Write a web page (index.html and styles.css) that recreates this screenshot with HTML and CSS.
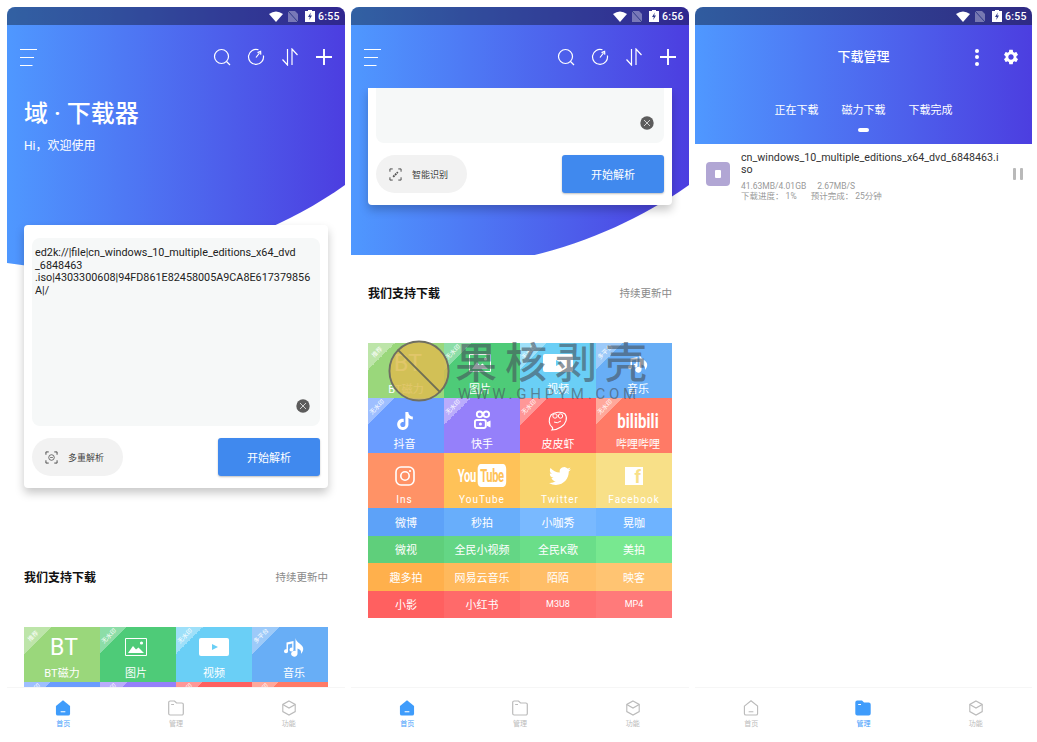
FILE: index.html
```html
<!DOCTYPE html>
<html lang="zh-CN">
<head>
    <meta charset="UTF-8">
    <meta name="viewport" content="width=device-width, initial-scale=1.0">
    <title>域下载器</title>
    <link rel="stylesheet" href="styles.css">
</head>
<body>
    <!-- shared icons -->
    <svg class="sprite" xmlns="http://www.w3.org/2000/svg">
        <symbol id="i-wifi" viewBox="0 0 14 11"><path d="M0 3Q7-2 14 3L7 11Z" fill="#fff"/></symbol>
        <symbol id="i-sim" viewBox="0 0 10 11"><path d="M0 0H7L10 3V11H0Z" fill="#fff" opacity=".35"/><path d="M0 0L10 11" stroke="#2f3a8a" stroke-width="1"/></symbol>
        <symbol id="i-bat" viewBox="0 0 10 12"><path d="M3 0H7V1H10V12H0V1H3Z" fill="#fff"/><path d="M5.8 2.5L3 7H4.8L4.2 10L7 5.5H5.2Z" fill="#2f3a8a"/></symbol>
        <symbol id="i-menu" viewBox="0 0 18 18"><path d="M0 1.5H17M0 9.5H14M0 17.5H12.5" stroke="#fff" stroke-width="1.1" fill="none"/></symbol>
        <symbol id="i-search" viewBox="0 0 18 18"><circle cx="8.5" cy="8.5" r="7" stroke="#fff" stroke-width="1.2" fill="none"/><path d="M13.5 13.5L17 17" stroke="#fff" stroke-width="1.2"/></symbol>
        <symbol id="i-refresh" viewBox="0 0 18 18"><path d="M11.5 1.8A7.5 7.5 0 1 0 16.4 7.5" stroke="#fff" stroke-width="1.2" fill="none"/><path d="M9 9.5L12.5 5M10.5 4.6L13.6 3.4L13.8 6.6" stroke="#fff" stroke-width="1.2" fill="none"/></symbol>
        <symbol id="i-arrows" viewBox="0 0 18 18"><path d="M6.5 1V17L1.5 11.5M11 17V1L16.5 7" stroke="#fff" stroke-width="1.2" fill="none"/></symbol>
        <symbol id="i-plus" viewBox="0 0 18 18"><path d="M1 9H17M9 1V17" stroke="#fff" stroke-width="1.9"/></symbol>
        <symbol id="i-photo" viewBox="0 0 22 18"><path d="M.5.5H21.5V17.5H.5Z" stroke="#fff" fill="none"/><path d="M3 15L8 8L11 11.5L13.5 9.5L19 15Z" fill="#fff"/><circle cx="16.5" cy="5" r="1.6" fill="#fff"/></symbol>
        <symbol id="i-music" viewBox="0 0 20 20"><path d="M11.5 1C12 5 16 6 18.5 9.5C20 12 19 15 17 17C17.5 14 16.5 12.5 13.5 11.5V16.5A3.2 3 0 1 1 11.5 14Z" fill="#fff"/><path d="M2.5 5.5L9.5 4V12.5A2 2 0 1 1 8.2 10.7V6.5L4 7.5V14A2 2 0 1 1 2.5 12.3Z" fill="#fff"/></symbol>
        <symbol id="i-tiktok" viewBox="0 0 24 24"><path d="M12.525.02c1.31-.02 2.61-.01 3.91-.02.08 1.53.63 3.09 1.75 4.17 1.12 1.11 2.7 1.62 4.24 1.79v4.03c-1.44-.05-2.89-.35-4.2-.97-.57-.26-1.1-.59-1.62-.93-.01 2.92.01 5.84-.02 8.75-.08 1.4-.54 2.79-1.35 3.94-1.31 1.92-3.58 3.17-5.91 3.21-1.43.08-2.86-.31-4.08-1.03-2.02-1.19-3.44-3.37-3.65-5.71-.02-.5-.03-1-.01-1.49.18-1.9 1.12-3.72 2.58-4.96 1.66-1.44 3.98-2.13 6.15-1.72.02 1.48-.04 2.96-.04 4.44-.99-.32-2.15-.23-3.02.37-.63.41-1.11 1.04-1.36 1.75-.21.51-.15 1.07-.14 1.61.24 1.64 1.82 3.02 3.5 2.87 1.12-.01 2.19-.66 2.77-1.61.19-.33.4-.67.41-1.06.1-1.79.06-3.57.07-5.36.01-4.03-.01-8.05.02-12.07z" fill="#fff"/></symbol>
        <symbol id="i-kuaishou" viewBox="0 0 18 20"><g fill="none" stroke="#fff" stroke-width="2"><circle cx="6" cy="4.5" r="3"/><circle cx="13" cy="4.5" r="3"/><rect x="1" y="10.5" width="11.5" height="8.5" rx="2"/></g><circle cx="6.8" cy="14.8" r="1.6" fill="#fff"/><path d="M13.5 13L17.5 11V18.5L13.5 16.5Z" fill="#fff"/></symbol>
        <symbol id="i-pipixia" viewBox="0 0 20 20"><path d="M3 4C6 1 14 0 17 3C20 7 18 13 13 16C10 18 7 19 4 19C5 18 5 17 4 16C1 14 0 8 3 4Z" fill="none" stroke="#fff" stroke-width="1.1"/><circle cx="7" cy="5" r="2.2" fill="none" stroke="#fff"/><circle cx="12.5" cy="5" r="2.2" fill="none" stroke="#fff"/><path d="M6 11Q9 13 13 10" fill="none" stroke="#fff"/></symbol>
        <symbol id="i-insta" viewBox="0 0 20 20"><rect x="1" y="1" width="18" height="18" rx="5" fill="none" stroke="#fff" stroke-width="1.6"/><circle cx="10" cy="10" r="4.2" fill="none" stroke="#fff" stroke-width="1.6"/><circle cx="15" cy="5" r="1.1" fill="#fff"/></symbol>
        <symbol id="i-twitter" viewBox="0 0 24 24"><path d="M23.953 4.57a10 10 0 01-2.825.775 4.958 4.958 0 002.163-2.723c-.951.555-2.005.959-3.127 1.184a4.92 4.92 0 00-8.384 4.482C7.69 8.095 4.067 6.13 1.64 3.162a4.822 4.822 0 00-.666 2.475c0 1.71.87 3.213 2.188 4.096a4.904 4.904 0 01-2.228-.616v.06a4.923 4.923 0 003.946 4.827 4.996 4.996 0 01-2.212.085 4.936 4.936 0 004.604 3.417 9.867 9.867 0 01-6.102 2.105c-.39 0-.779-.023-1.17-.067a13.995 13.995 0 007.557 2.209c9.053 0 13.998-7.496 13.998-13.985 0-.21 0-.42-.015-.63A9.935 9.935 0 0024 4.59z" fill="#fff"/></symbol>
        <symbol id="i-gear" viewBox="0 0 24 24"><path d="M19.14 12.94c.04-.3.06-.61.06-.94 0-.32-.02-.64-.07-.94l2.03-1.58c.18-.14.23-.41.12-.61l-1.92-3.32c-.12-.22-.37-.29-.59-.22l-2.39.96c-.5-.38-1.03-.7-1.62-.94l-.36-2.54c-.04-.24-.24-.41-.48-.41h-3.84c-.24 0-.43.17-.47.41l-.36 2.54c-.59.24-1.13.57-1.62.94l-2.39-.96c-.22-.08-.47 0-.59.22L2.74 8.87c-.12.21-.08.47.12.61l2.03 1.58c-.05.3-.09.63-.09.94s.02.64.07.94l-2.03 1.58c-.18.14-.23.41-.12.61l1.92 3.32c.12.22.37.29.59.22l2.39-.96c.5.38 1.03.7 1.62.94l.36 2.54c.05.24.24.41.48.41h3.84c.24 0 .44-.17.47-.41l.36-2.54c.59-.24 1.13-.56 1.62-.94l2.39.96c.22.08.47 0 .59-.22l1.92-3.32c.12-.22.07-.47-.12-.61l-2.01-1.58zM12 15.6c-1.98 0-3.6-1.62-3.6-3.6s1.62-3.6 3.6-3.6 3.6 1.62 3.6 3.6-1.62 3.6-3.6 3.6z" fill="#fff"/></symbol>
        <symbol id="i-clear" viewBox="0 0 14 14"><circle cx="7" cy="7" r="6.7" fill="#5c5c5c"/><path d="M4 4L10 10M10 4L4 10" stroke="#ddd" stroke-width=".9"/></symbol>
        <symbol id="i-scan" viewBox="0 0 14 14"><path d="M1 4V1H4M10 1H13V4M13 10V13H10M4 13H1V10" fill="none" stroke="#444" stroke-width="1"/><circle cx="7" cy="7" r="3" fill="none" stroke="#555" stroke-width=".9"/><path d="M5.5 7H8.5" stroke="#555" stroke-width=".8"/></symbol>
        <symbol id="i-link" viewBox="0 0 14 14"><path d="M1 4V1H4M10 1H13V4M13 10V13H10M4 13H1V10" fill="none" stroke="#444" stroke-width="1"/><path d="M4.5 9.5L9.5 4.5" stroke="#555" stroke-width="2" stroke-dasharray="2 .8"/></symbol>
        <symbol id="i-home" viewBox="0 0 16 17"><path d="M1 6.5L8 .8L15 6.5V14.5A1.6 1.6 0 0 1 13.4 16H2.6A1.6 1.6 0 0 1 1 14.5Z" fill="none" stroke="#bbb" stroke-width="1.2"/><path d="M5.5 12.5H10.5" stroke="#bbb" stroke-width="1.1"/></symbol>
        <symbol id="i-home-on" viewBox="0 0 16 17"><path d="M.5 6.5L8 .3L15.5 6.5V14.5A2 2 0 0 1 13.5 16.5H2.5A2 2 0 0 1 .5 14.5Z" fill="#3f9cfb"/><path d="M5.5 12.5H10.5" stroke="#fff" stroke-width="1.1"/></symbol>
        <symbol id="i-folder" viewBox="0 0 16 16"><path d="M.7 2.5A1.5 1.5 0 0 1 2.2 1H6.5L8.5 3H13.8A1.5 1.5 0 0 1 15.3 4.5V13.5A1.5 1.5 0 0 1 13.8 15H2.2A1.5 1.5 0 0 1 .7 13.5Z" fill="none" stroke="#bbb" stroke-width="1.2"/><path d="M3.2 4.5H6" stroke="#bbb"/></symbol>
        <symbol id="i-folder-on" viewBox="0 0 16 16"><path d="M.3 2.5A2 2 0 0 1 2.3.5H7L9 2.5H13.7A2 2 0 0 1 15.7 4.5V13.5A2 2 0 0 1 13.7 15.5H2.3A2 2 0 0 1 .3 13.5Z" fill="#3f9cfb"/><path d="M3.2 4.5H6" stroke="#fff"/></symbol>
        <symbol id="i-box" viewBox="0 0 16 17"><path d="M8 1L14.6 4.7V12.3L8 16L1.4 12.3V4.7Z" fill="none" stroke="#bbb" stroke-width="1.2"/><path d="M1.4 4.7L8 8.5L14.6 4.7" fill="none" stroke="#bbb" stroke-width="1.2"/></symbol>
    </svg>

    <div class="phones">

        <!-- home -->
        <section class="phone">
            <div class="hero-bg"></div>
            <div class="status">
                <svg class="st-wifi"><use href="#i-wifi"/></svg>
                <svg class="st-sim"><use href="#i-sim"/></svg>
                <svg class="st-bat"><use href="#i-bat"/></svg>
                <span class="st-time">6:55</span>
            </div>
            <div class="toolbar">
                <svg class="tool"><use href="#i-menu"/></svg>
                <div class="tool-group">
                    <svg class="tool"><use href="#i-search"/></svg>
                    <svg class="tool"><use href="#i-refresh"/></svg>
                    <svg class="tool"><use href="#i-arrows"/></svg>
                    <svg class="tool"><use href="#i-plus"/></svg>
                </div>
            </div>
            <main class="content">
                <div class="intro">
                    <h1 class="app-name">域 · 下载器</h1>
                    <p class="app-hi">Hi，欢迎使用</p>
                </div>
                <div class="card">
                    <div class="link-box link-box-tall">
                        <div class="link-text">ed2k://|file|cn_windows_10_multiple_editions_x64_dvd<br>_6848463<br>.iso|4303300608|94FD861E82458005A9CA8E617379856<br>A|/</div>
                        <svg class="clear"><use href="#i-clear"/></svg>
                    </div>
                    <div class="card-actions">
                        <div class="pill"><svg class="pill-icon"><use href="#i-scan"/></svg>多重解析</div>
                        <div class="start-btn">开始解析</div>
                    </div>
                </div>
                <div class="support-head">
                    <h2>我们支持下载</h2>
                    <span>持续更新中</span>
                </div>
                <div class="grid">
                    <div class="cell cell-top c-bt"><span class="tag"><b>推荐</b></span><div class="cell-icon bt-mark">BT</div><div class="cell-label">BT磁力</div></div>
                    <div class="cell cell-top c-photo"><span class="tag"><b>无水印</b></span><div class="cell-icon"><svg class="ic-photo"><use href="#i-photo"/></svg></div><div class="cell-label">图片</div></div>
                    <div class="cell cell-top c-video"><span class="tag"><b>无水印</b></span><div class="cell-icon"><div class="video-mark"></div></div><div class="cell-label">视频</div></div>
                    <div class="cell cell-top c-music"><span class="tag"><b>多平台</b></span><div class="cell-icon"><svg class="ic-music"><use href="#i-music"/></svg></div><div class="cell-label">音乐</div></div>
                    <div class="cell c-tiktok"><span class="tag"><b>无水印</b></span></div>
                    <div class="cell c-kuaishou"><span class="tag"><b>无水印</b></span></div>
                    <div class="cell c-pipixia"><span class="tag"><b>无水印</b></span></div>
                    <div class="cell c-bili"><span class="tag"><b>无水印</b></span></div>
                </div>
            </main>
            <nav class="tabbar">
                <div class="tab-item tab-on"><svg><use href="#i-home-on"/></svg><span>首页</span></div>
                <div class="tab-item"><svg><use href="#i-folder"/></svg><span>管理</span></div>
                <div class="tab-item"><svg><use href="#i-box"/></svg><span>功能</span></div>
            </nav>
        </section>

        <!-- home, scrolled -->
        <section class="phone">
            <div class="hero-bg hero-bg-cut"></div>
            <div class="status">
                <svg class="st-wifi"><use href="#i-wifi"/></svg>
                <svg class="st-sim"><use href="#i-sim"/></svg>
                <svg class="st-bat"><use href="#i-bat"/></svg>
                <span class="st-time">6:56</span>
            </div>
            <div class="toolbar">
                <svg class="tool"><use href="#i-menu"/></svg>
                <div class="tool-group">
                    <svg class="tool"><use href="#i-search"/></svg>
                    <svg class="tool"><use href="#i-refresh"/></svg>
                    <svg class="tool"><use href="#i-arrows"/></svg>
                    <svg class="tool"><use href="#i-plus"/></svg>
                </div>
            </div>
            <main class="content">
                <div class="card card-scrolled">
                    <div class="link-box link-box-short">
                        <svg class="clear"><use href="#i-clear"/></svg>
                    </div>
                    <div class="card-actions">
                        <div class="pill"><svg class="pill-icon"><use href="#i-link"/></svg>智能识别</div>
                        <div class="start-btn">开始解析</div>
                    </div>
                </div>
                <div class="support-head">
                    <h2>我们支持下载</h2>
                    <span>持续更新中</span>
                </div>
                <div class="grid">
                    <div class="cell cell-top c-bt"><span class="tag"><b>推荐</b></span><div class="cell-icon bt-mark">BT</div><div class="cell-label">BT磁力</div></div>
                    <div class="cell cell-top c-photo"><span class="tag"><b>无水印</b></span><div class="cell-icon"><svg class="ic-photo"><use href="#i-photo"/></svg></div><div class="cell-label">图片</div></div>
                    <div class="cell cell-top c-video"><span class="tag"><b>无水印</b></span><div class="cell-icon"><div class="video-mark"></div></div><div class="cell-label">视频</div></div>
                    <div class="cell cell-top c-music"><span class="tag"><b>多平台</b></span><div class="cell-icon"><svg class="ic-music"><use href="#i-music"/></svg></div><div class="cell-label">音乐</div></div>

                    <div class="cell c-tiktok"><span class="tag"><b>无水印</b></span><div class="cell-icon"><svg class="ic-tiktok"><use href="#i-tiktok"/></svg></div><div class="cell-label">抖音</div></div>
                    <div class="cell c-kuaishou"><span class="tag"><b>无水印</b></span><div class="cell-icon"><svg class="ic-kuaishou"><use href="#i-kuaishou"/></svg></div><div class="cell-label">快手</div></div>
                    <div class="cell c-pipixia"><span class="tag"><b>无水印</b></span><div class="cell-icon"><svg class="ic-pipixia"><use href="#i-pipixia"/></svg></div><div class="cell-label">皮皮虾</div></div>
                    <div class="cell c-bili"><span class="tag"><b>无水印</b></span><div class="cell-icon bili-mark">bilibili</div><div class="cell-label">哔哩哔哩</div></div>

                    <div class="cell c-ins"><div class="cell-icon"><svg class="ic-insta"><use href="#i-insta"/></svg></div><div class="cell-label cell-latin">Ins</div></div>
                    <div class="cell c-yt"><div class="cell-icon"><div class="yt-mark">You<span>Tube</span></div></div><div class="cell-label cell-latin">YouTube</div></div>
                    <div class="cell c-tw"><div class="cell-icon"><svg class="ic-twitter"><use href="#i-twitter"/></svg></div><div class="cell-label cell-latin">Twitter</div></div>
                    <div class="cell c-fb"><div class="cell-icon"><div class="fb-mark">f</div></div><div class="cell-label cell-latin">Facebook</div></div>

                    <div class="cell-small s1">微博</div>
                    <div class="cell-small s2">秒拍</div>
                    <div class="cell-small s3">小咖秀</div>
                    <div class="cell-small s4">晃咖</div>
                    <div class="cell-small s5">微视</div>
                    <div class="cell-small s6">全民小视频</div>
                    <div class="cell-small s7">全民K歌</div>
                    <div class="cell-small s8">美拍</div>
                    <div class="cell-small s9">趣多拍</div>
                    <div class="cell-small s10">网易云音乐</div>
                    <div class="cell-small s11">陌陌</div>
                    <div class="cell-small s12">映客</div>
                    <div class="cell-small s13">小影</div>
                    <div class="cell-small s14">小红书</div>
                    <div class="cell-small s15">M3U8</div>
                    <div class="cell-small s16">MP4</div>
                </div>
            </main>
            <nav class="tabbar">
                <div class="tab-item tab-on"><svg><use href="#i-home-on"/></svg><span>首页</span></div>
                <div class="tab-item"><svg><use href="#i-folder"/></svg><span>管理</span></div>
                <div class="tab-item"><svg><use href="#i-box"/></svg><span>功能</span></div>
            </nav>
            <!-- site watermark laid over the shot -->
            <svg class="wm-circle" viewBox="0 0 64 64"><circle cx="32" cy="32" r="30.5" fill="#dcbc50" fill-opacity=".85" stroke="#6f6f62" stroke-width="2"/><path d="M10 10L54 54" stroke="#6f6f55" stroke-width="2"/></svg>
            <div class="wm-text">
                <div class="wm-name">果核剥壳</div>
                <div class="wm-url">WWW.GHPYM.COM</div>
            </div>
        </section>

        <!-- download manager -->
        <section class="phone">
            <div class="status status-solid">
                <svg class="st-wifi"><use href="#i-wifi"/></svg>
                <svg class="st-sim"><use href="#i-sim"/></svg>
                <svg class="st-bat"><use href="#i-bat"/></svg>
                <span class="st-time">6:55</span>
            </div>
            <header class="dl-head">
                <div class="dl-title-row">
                    <span></span>
                    <div class="dl-title">下载管理</div>
                    <div class="dl-actions">
                        <div class="dots"><i></i><i></i><i></i></div>
                        <svg class="tool"><use href="#i-gear"/></svg>
                    </div>
                </div>
                <div class="dl-tabs">
                    <div class="dl-tab">正在下载</div>
                    <div class="dl-tab dl-tab-active">磁力下载</div>
                    <div class="dl-tab">下载完成</div>
                </div>
            </header>
            <main class="content">
                <div class="dl-row">
                    <div class="file-icon"><div class="file-glyph"></div></div>
                    <div class="dl-info">
                        <div class="dl-name">cn_windows_10_multiple_editions_x64_dvd_6848463.i<br>so</div>
                        <div class="dl-meta"><span>41.63MB/4.01GB</span><span>2.67MB/S</span></div>
                        <div class="dl-meta dl-meta-cn"><span>下载进度： 1%</span><span>预计完成： 25分钟</span></div>
                    </div>
                    <div class="pause"><i></i><i></i></div>
                </div>
            </main>
            <nav class="tabbar">
                <div class="tab-item"><svg><use href="#i-home"/></svg><span>首页</span></div>
                <div class="tab-item tab-on"><svg><use href="#i-folder-on"/></svg><span>管理</span></div>
                <div class="tab-item"><svg><use href="#i-box"/></svg><span>功能</span></div>
            </nav>
        </section>

    </div>
</body>
</html>
```

FILE: styles.css
```css
* {
    box-sizing: border-box;
}

body {
    margin: 0;
    background: #fff;
    font-family: Roboto, "Noto Sans CJK SC", sans-serif;
    color: #222;
}

h1, h2, p {
    margin: 0;
}

.sprite {
    display: none;
}

.phones {
    display: flex;
    gap: 6px;
    height: 742px;
    padding: 7px 5px 7px 7px;
}

.phone {
    position: relative;
    display: flex;
    flex-direction: column;
    width: 338px;
    background: #fff;
    border-radius: 8px 8px 0 0;
    overflow: hidden;
}

.phone:last-child {
    width: 337px;
}

/* curved blue backdrop */
.hero-bg {
    position: absolute;
    left: 0;
    top: 0;
    width: 338px;
    height: 272px;
    background: linear-gradient(90deg, #4f98ff, #4c3ee0);
    clip-path: path("M0 0H338V178C250 240 130 276 0 256Z");
}

.hero-bg-cut {
    height: 248px;
}

/* status bar */
.status {
    position: relative;
    flex: none;
    display: flex;
    align-items: center;
    justify-content: flex-end;
    height: 18px;
    padding-right: 6px;
    background: rgba(0, 0, 0, .36);
}

.status-solid {
    background: linear-gradient(90deg, #305c9f, #2f2a84);
}

.st-wifi {
    width: 14px;
    height: 11px;
}

.st-sim {
    width: 10px;
    height: 11px;
    margin-left: 5px;
}

.st-bat {
    width: 10px;
    height: 12px;
    margin-left: 7px;
}

.st-time {
    width: 21px;
    margin-left: 3px;
    color: #fff;
    font-size: 10.5px;
    font-weight: 500;
    letter-spacing: .3px;
    text-align: right;
}

/* top toolbar */
.toolbar {
    position: relative;
    flex: none;
    display: flex;
    align-items: center;
    justify-content: space-between;
    height: 63px;
    padding: 0 12px 0 13px;
}

.tool-group {
    display: flex;
    gap: 16px;
}

.tool {
    display: block;
    width: 18px;
    height: 18px;
}

.content {
    position: relative;
    flex: 1;
    min-height: 0;
    overflow: hidden;
}

.intro {
    padding: 12px 0 0 17px;
    color: #fff;
}

.app-name {
    font-size: 24px;
    font-weight: 500;
    line-height: 28px;
}

.app-hi {
    margin-top: 10px;
    font-size: 12px;
    line-height: 16px;
}

/* link input card */
.card {
    width: 304px;
    margin: 71px 0 0 17px;
    padding: 13px 8px 12px;
    background: #fff;
    border-radius: 4px;
    box-shadow: 0 5px 10px rgba(0, 0, 0, .22);
}

.card-scrolled {
    margin-top: 0;
    padding-top: 0;
    border-radius: 0 0 4px 4px;
}

.link-box {
    position: relative;
    padding: 9px 3px;
    background: #f6f8f8;
    border-radius: 8px;
}

.link-box-tall {
    height: 188px;
}

.link-box-short {
    height: 55px;
    border-radius: 0 0 8px 8px;
}

.link-text {
    font-size: 10.8px;
    line-height: 12.7px;
    white-space: nowrap;
    color: #222;
}

.clear {
    position: absolute;
    right: 10px;
    bottom: 13px;
    width: 14px;
    height: 14px;
}

.card-actions {
    display: flex;
    justify-content: space-between;
    margin-top: 12px;
}

.pill {
    display: flex;
    align-items: center;
    gap: 10px;
    width: 91px;
    height: 38px;
    padding-left: 13px;
    background: #f2f2f2;
    border-radius: 19px;
    font-size: 9px;
    color: #444;
}

.pill-icon {
    width: 13px;
    height: 13px;
}

.start-btn {
    display: flex;
    align-items: center;
    justify-content: center;
    width: 102px;
    height: 38px;
    background: #4089ee;
    border-radius: 3px;
    box-shadow: 0 1px 2px rgba(0, 0, 0, .25);
    color: #fff;
    font-size: 11px;
}

.support-head {
    display: flex;
    align-items: center;
    justify-content: space-between;
    width: 304px;
    height: 20px;
    margin: 78px 0 0 17px;
}

.card-scrolled + .support-head {
    margin-top: 77px;
}

.support-head h2 {
    font-size: 12px;
    font-weight: 700;
    color: #111;
}

.support-head span {
    font-size: 10.5px;
    color: #8a8a8a;
}

/* supported sites grid */
.grid {
    display: grid;
    grid-template-columns: repeat(4, 76px);
    margin: 41px 0 0 17px;
    color: #fff;
}

.cell {
    position: relative;
    display: flex;
    flex-direction: column;
    align-items: center;
    height: 55px;
    padding-top: 11px;
    overflow: hidden;
}

.cell-top {
    padding-top: 8px;
}

.cell-icon {
    display: flex;
    align-items: center;
    justify-content: center;
    height: 24px;
}

.cell-label {
    margin-top: 5px;
    font-size: 11px;
    line-height: 16px;
}

.cell-top .cell-label {
    margin-top: 7px;
}

.cell-latin {
    font-size: 10px;
    letter-spacing: 1px;
}

.c-kuaishou .cell-label {
    margin-top: 8px;
}

/* the artwork in the shot is not quite centred in every cell */
.c-photo {
    padding-right: 4px;
}

.c-music,
.c-bili {
    padding-left: 8px;
}

.c-tiktok,
.c-ins {
    padding-right: 3px;
}

.c-tw {
    padding-left: 4px;
}

.tag {
    position: absolute;
    left: 0;
    top: 0;
    width: 27px;
    height: 27px;
    background: linear-gradient(135deg, rgba(255, 255, 255, .35) 50%, transparent 50%);
}

.tag b {
    position: absolute;
    left: -3px;
    top: 5px;
    width: 24px;
    font-size: 6px;
    font-weight: 400;
    line-height: 8px;
    text-align: center;
    white-space: nowrap;
    transform: rotate(-45deg);
}

.c-bt { background: #9ad77b; }
.c-photo { background: #4ecb78; }
.c-video { background: #6acff6; }
.c-music { background: #68aef6; }
.c-tiktok { background: #6a9cff; }
.c-kuaishou { background: #9580fa; }
.c-pipixia { background: #ff6060; }
.c-bili { background: #ff7a66; }
.c-ins { background: #ff9266; }
.c-yt { background: #ffc258; }
.c-tw { background: #f8d56e; }
.c-fb { background: #f8e088; }

.bt-mark {
    margin-left: 4px;
    font-size: 23px;
    font-weight: 400;
}

.ic-photo {
    width: 22px;
    height: 18px;
}

.video-mark {
    position: relative;
    width: 30px;
    height: 18px;
    background: #fff;
    border-radius: 2px;
}

.video-mark::after {
    content: "";
    position: absolute;
    left: 13px;
    top: 6px;
    border-left: 6px solid #6acff6;
    border-top: 3.5px solid transparent;
    border-bottom: 3.5px solid transparent;
}

.ic-music {
    width: 20px;
    height: 20px;
}

.ic-tiktok {
    width: 18px;
    height: 20px;
}

.ic-kuaishou {
    width: 17px;
    height: 19px;
}

.ic-pipixia {
    width: 20px;
    height: 20px;
}

.ic-insta {
    width: 20px;
    height: 20px;
}

.ic-twitter {
    width: 24px;
    height: 22px;
}

.bili-mark {
    font-size: 15px;
    font-weight: 700;
    letter-spacing: .1px;
    transform: scaleY(1.3);
}

.yt-mark {
    flex: none;
    font-size: 18px;
    font-weight: 700;
    letter-spacing: -.6px;
    white-space: nowrap;
    transform: scaleX(.62);
}

.yt-mark span {
    margin-left: 3px;
    padding: 1px 4px;
    background: #fff;
    border-radius: 5px;
    color: #ffc258;
}

.fb-mark {
    display: flex;
    align-items: flex-end;
    justify-content: flex-end;
    width: 18px;
    height: 18px;
    padding-right: 2px;
    background: #fff;
    color: #f8e088;
    font-size: 18px;
    font-weight: 700;
    line-height: 17px;
}

.cell-small {
    display: flex;
    align-items: center;
    justify-content: center;
    height: 27.5px;
    font-size: 11px;
}

.s1 { background: #5da2f8; }
.s2 { background: #68aefb; }
.s3 { background: #79b9ff; }
.s4 { background: #6eb3ff; }
.s5 { background: #5fcf7b; }
.s6 { background: #64d685; }
.s7 { background: #6ade89; }
.s8 { background: #78e890; }
.s9 { background: #ffb04c; }
.s10 { background: #ffb95c; }
.s11 { background: #ffbe68; }
.s12 { background: #ffc472; }
.s13 { background: #ff6060; }
.s14 { background: #ff6a6a; }
.s15 { background: #ff7272; font-size: 9px; }
.s16 { background: #ff7a7a; font-size: 9px; }

/* bottom tabs */
.tabbar {
    position: relative;
    flex: none;
    display: flex;
    height: 48px;
    background: #fff;
    border-top: 1px solid #f6f6f6;
}

.tab-item {
    display: flex;
    flex-direction: column;
    align-items: center;
    width: 113px;
    padding-top: 12px;
    color: #bbb;
    font-size: 7px;
    line-height: 10px;
}

.tab-item svg {
    width: 16px;
    height: 16px;
    margin-bottom: 3px;
}

.tab-on {
    color: #3f9cfb;
}

/* watermark */
.wm-circle {
    position: absolute;
    left: 37px;
    top: 333px;
    width: 62px;
    height: 62px;
}

.wm-text {
    position: absolute;
    left: 104px;
    top: 335px;
    color: rgba(70, 80, 90, .6);
}

.wm-name {
    font-size: 42px;
    font-weight: 500;
    line-height: 44px;
    letter-spacing: 8px;
    white-space: nowrap;
}

.wm-url {
    padding-left: 3px;
    font-size: 15px;
    line-height: 16px;
    letter-spacing: 3.8px;
    white-space: nowrap;
}

/* download manager */
.dl-head {
    flex: none;
    height: 119px;
    background: linear-gradient(90deg, #4f98ff, #4c3ee0);
    color: #fff;
}

.dl-title-row {
    display: grid;
    grid-template-columns: 1fr auto 1fr;
    align-items: center;
    height: 60px;
    padding-right: 12px;
    padding-left: 12px;
}

.dl-title {
    font-size: 13px;
    font-weight: 500;
}

.dl-actions {
    display: flex;
    justify-content: flex-end;
    gap: 16px;
    margin-top: 4px;
}

.dots {
    display: flex;
    flex-direction: column;
    align-items: center;
    justify-content: center;
    gap: 2.5px;
    width: 18px;
}

.dots i {
    width: 4px;
    height: 4px;
    background: #fff;
    border-radius: 50%;
}

.dl-tabs {
    display: flex;
    justify-content: center;
    gap: 23px;
    padding-top: 18px;
}

.dl-tab {
    display: flex;
    flex-direction: column;
    align-items: center;
    gap: 9px;
    font-size: 11px;
    line-height: 16px;
}

.dl-tab::after {
    content: "";
    width: 11px;
    height: 4px;
    border-radius: 2px;
}

.dl-tab-active::after {
    background: #fff;
}

.dl-row {
    display: flex;
    padding: 7.5px 0 0 11px;
}

.file-icon {
    display: flex;
    align-items: center;
    justify-content: center;
    flex: none;
    width: 24px;
    height: 24px;
    margin-top: 10.5px;
    background: #b1a6d4;
    border-radius: 4px;
}

.file-glyph {
    width: 6px;
    height: 8px;
    background: #fff;
    border-radius: 1px;
}

.dl-info {
    flex: none;
    width: 265px;
    margin-left: 11px;
}

.dl-name {
    font-size: 10.7px;
    line-height: 12.7px;
    white-space: nowrap;
    color: #333;
}

.dl-meta {
    display: flex;
    gap: 11px;
    margin-top: 4px;
    font-size: 8.5px;
    line-height: 10px;
    color: #999;
}

.dl-meta-cn {
    gap: 14px;
    margin-top: 0;
}

.pause {
    display: flex;
    gap: 4px;
    margin: 16.5px 0 0 7px;
}

.pause i {
    width: 3px;
    height: 12px;
    background: #b9b9b9;
    border-radius: 1px;
}
```
